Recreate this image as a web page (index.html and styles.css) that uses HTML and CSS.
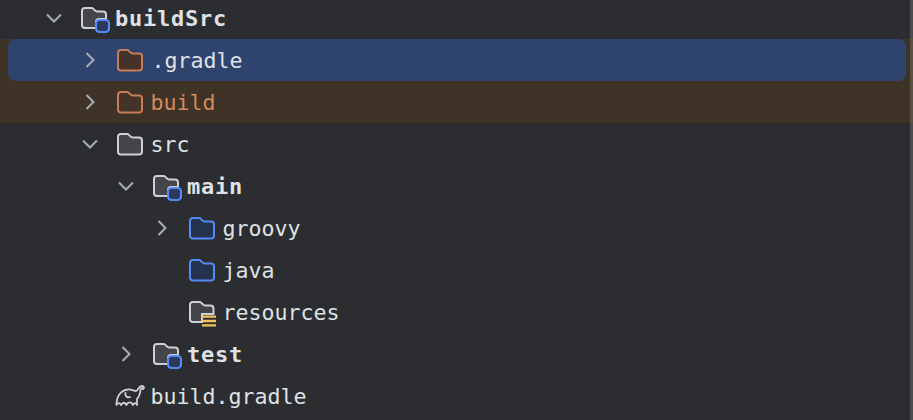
FILE: index.html
```html
<!DOCTYPE html>
<html lang="en">
<head>
<meta charset="utf-8">
<title>Project tree</title>
<link rel="stylesheet" href="styles.css">
</head>
<body>
<svg class="defs" width="0" height="0" aria-hidden="true">
  <defs>
    <symbol id="chev-down" viewBox="0 0 20 20"><path d="M3 6.500 10 13.500 17 6.500" fill="none" stroke="#a8adb3" stroke-width="2"/></symbol>
    <symbol id="chev-right" viewBox="0 0 20 20"><path d="M6.500 3 13.500 10 6.500 17" fill="none" stroke="#a8adb3" stroke-width="2"/></symbol>
    <symbol id="folder" viewBox="0 0 28 28"><path d="M2 7a3 3 0 0 1 3-3h6.500c1.500 0 2.500 3.500 5 3.500H23a3 3 0 0 1 3 3V21.500a3 3 0 0 1-3 3H5a3 3 0 0 1-3-3Z" fill="var(--fill)" stroke="var(--line)" stroke-width="2"/></symbol>
    <symbol id="module" viewBox="0 0 30 30"><path d="M2 8a3 3 0 0 1 3-3h7c1.500 0 2.500 3.500 5 3.500H23a3 3 0 0 1 3 3V16H19a3 3 0 0 0-3 3v6H5a3 3 0 0 1-3-3Z" fill="#43454a" stroke="#ced0d6" stroke-width="2"/><rect x="16" y="17" width="13" height="12" rx="3.500" fill="#2b3a5c" stroke="#548af7" stroke-width="2.200"/></symbol>
    <symbol id="resources" viewBox="0 0 30 30"><path d="M2 8a3 3 0 0 1 3-3h7c1.500 0 2.500 3.500 5 3.500H22.500a3 3 0 0 1 3 3V17H14v8H5a3 3 0 0 1-3-3Z" fill="#43454a" stroke="#ced0d6" stroke-width="2"/><path d="M14 19.600h14M14 24h14M14 28.400h14" stroke="#f2c55c" stroke-width="2.400"/></symbol>
    <symbol id="gradle" viewBox="0 0 30 24"><path d="M1.500 21C1.500 12 6 6 13 5.500C16 5 19 7 21 7C23 7 23.500 2 27 2C29 2 29.500 4 28 5C27 4 26 4.500 25.500 6C25 10 24 13 22 15L22 21C20.500 18.500 19.500 18.500 18 21C16.500 17.500 13 17.500 11.500 21C10 18 8 18 6 21C4.500 18.500 3 18.500 1.500 21Z M10.500 9C10 12 12 14 15 13" fill="none" stroke="#ced0d6" stroke-width="1.800" stroke-linejoin="round" stroke-linecap="round"/></symbol>
  </defs>
</svg>
<main class="tree">
  <div class="row lvl-1"><svg class="chev"><use href="#chev-down"/></svg><svg class="icon-wide"><use href="#module"/></svg><span class="label strong">buildSrc</span></div>
  <div class="row-group">
    <div class="row lvl-2 selected"><svg class="chev"><use href="#chev-right"/></svg><svg class="icon folder-ex"><use href="#folder"/></svg><span class="label sel-label">.gradle</span></div>
    <div class="row lvl-2"><svg class="chev"><use href="#chev-right"/></svg><svg class="icon folder-ex"><use href="#folder"/></svg><span class="label ex-text">build</span></div>
  </div>
  <div class="row lvl-2"><svg class="chev"><use href="#chev-down"/></svg><svg class="icon folder-plain"><use href="#folder"/></svg><span class="label">src</span></div>
  <div class="row lvl-3"><svg class="chev"><use href="#chev-down"/></svg><svg class="icon-wide"><use href="#module"/></svg><span class="label strong">main</span></div>
  <div class="row lvl-4"><svg class="chev"><use href="#chev-right"/></svg><svg class="icon folder-src"><use href="#folder"/></svg><span class="label">groovy</span></div>
  <div class="row lvl-4"><span class="chev"></span><svg class="icon folder-src"><use href="#folder"/></svg><span class="label">java</span></div>
  <div class="row lvl-4"><span class="chev"></span><svg class="icon-res"><use href="#resources"/></svg><span class="label">resources</span></div>
  <div class="row lvl-3"><svg class="chev"><use href="#chev-right"/></svg><svg class="icon-wide"><use href="#module"/></svg><span class="label strong">test</span></div>
  <div class="row lvl-2"><span class="chev"></span><svg class="gradle-icon"><use href="#gradle"/></svg><span class="label">build.gradle</span></div>
</main>
<div class="scrollbar"></div>
</body>
</html>
```
FILE: styles.css
```css
html, body {
  margin: 0;
  height: 100%;
  overflow: hidden;
  background: #2b2d30;
}
.defs { display: block; height: 0; }
.tree {
  margin-top: -3px;
  font-family: "DejaVu Sans Mono", "Liberation Mono", monospace;
  font-size: 21.6px;
  color: #dfe1e5;
}
.row {
  display: flex;
  align-items: center;
  height: 42px;
  box-sizing: border-box;
}
.lvl-1 { padding-left: 44px; }
.lvl-2 { padding-left: 80px; }
.lvl-3 { padding-left: 116px; }
.lvl-4 { padding-left: 152px; }
.chev { width: 20px; height: 20px; flex: none; margin-right: 16px; }
.icon { width: 28px; height: 28px; flex: none; margin-right: 6.5px; }
.icon-wide { width: 30px; height: 30px; flex: none; margin-right: 5px; }
.icon-res { width: 30px; height: 30px; flex: none; margin-right: 4.5px; }
.gradle-icon { width: 30px; height: 24px; flex: none; margin: 0 5.5px 0 -1px; }
.label { white-space: pre; }
.sel-label { margin-left: 1px; }
.strong { font-weight: 700; font-size: 22px; letter-spacing: 0.75px; }
.row-group { background: #3f3226; }
.selected { background: #2e436e; border-radius: 8px; margin: 0 7px 0 8px; padding-left: 72px; }
.ex-text { color: #d08a5c; }
.folder-ex { --fill: #45322b; --line: #c77d55; }
.folder-plain { --fill: #43454a; --line: #ced0d6; }
.folder-src { --fill: #25324d; --line: #548af7; }
.scrollbar {
  position: fixed;
  top: 0;
  right: 0;
  bottom: 0;
  width: 3px;
  background: rgba(255, 255, 255, 0.15);
}
```
